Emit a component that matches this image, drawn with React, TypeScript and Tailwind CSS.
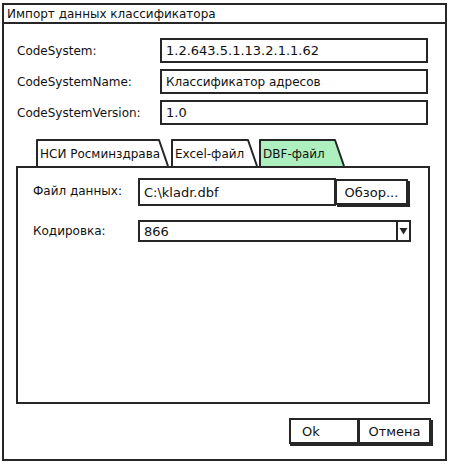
import React from "react";

const B = "border-[#262626]";

function Tab({ w, label, active }: { w: number; label: string; active?: boolean }) {
  return (
    <div className="relative h-[27px] flex items-center pl-[4px] pt-[3px]" style={{ width: w }}>
      <svg className="absolute inset-0" width={w} height={27} viewBox={`0 0 ${w} 27`}>
        <path
          d={`M1 27 L1 1 L${w - 10} 1 L${w - 1} 27`}
          fill={active ? "#aeefbf" : "#ffffff"}
          stroke="#262626"
          strokeWidth={2}
          strokeLinejoin="round"
        />
      </svg>
      <span className="relative leading-none whitespace-nowrap text-[12px]">{label}</span>
    </div>
  );
}

function Field({ value, w, small }: { value: string; w: number; small?: boolean }) {
  return (
    <div
      className={`h-[25px] border-2 ${B} flex items-center pl-[4px] leading-none ${small ? "text-[12px]" : "text-[13px]"}`}
      style={{ width: w }}
    >
      {value}
    </div>
  );
}

export default function App() {
  return (
    <div className="w-[450px] h-[464px] bg-white pt-[3px] pl-[2px] pr-[3px] pb-[3px] font-['DejaVu_Sans',sans-serif] text-[13px] text-[#111]">
      <div className={`h-full flex flex-col border-2 ${B}`}>
        <div className={`h-[19px] border-b-2 ${B} flex items-center pl-[3px] leading-none text-[12px]`}>
          Импорт данных классификатора
        </div>
        <div className="flex-1 flex flex-col pl-[12px] pt-[14px]">
          <div className="flex flex-col gap-[6px]">
            <div className="flex items-center">
              <div className="w-[144px] pl-[1px] text-[12px]">CodeSystem:</div>
              <Field value="1.2.643.5.1.13.2.1.1.62" w={268} />
            </div>
            <div className="flex items-center">
              <div className="w-[144px] pl-[1px] text-[12px]">CodeSystemName:</div>
              <Field value="Классификатор адресов" w={268} small />
            </div>
            <div className="flex items-center">
              <div className="w-[144px] pl-[1px] text-[12px]">CodeSystemVersion:</div>
              <Field value="1.0" w={268} />
            </div>
          </div>

          <div className="mt-[14px] flex items-end pl-[20px]">
            <Tab w={133} label="НСИ Росминздрава" />
            <div className="w-[2px]" />
            <Tab w={87} label="Excel-файл" />
            <div className="w-[1px]" />
            <Tab w={86} label="DBF-файл" active />
          </div>
          <div className={`w-[414px] h-[238px] border-2 ${B} pt-[10px] pl-[15px] flex flex-col`}>
            <div className="flex items-center">
              <div className="w-[105px] text-[12px] -mt-[2px]">Файл данных:</div>
              <div className={`w-[198px] h-[28px] border-2 ${B} flex items-center pl-[4px] leading-none`}>
                C:\kladr.dbf
              </div>
              <div
                className={`w-[73px] h-[26px] -ml-[1px] border-2 ${B} shadow-[2px_2px_0_#262626] flex items-center justify-center leading-none bg-white`}
              >
                Обзор...
              </div>
            </div>
            <div className="flex items-center mt-[14px]">
              <div className="w-[105px] text-[12px]">Кодировка:</div>
              <div className={`w-[273px] h-[22px] border-2 ${B} flex items-center`}>
                <div className="flex-1 pl-[4px] leading-none">866</div>
                <div className={`w-[13px] h-full border-l-2 ${B} flex items-center justify-center`}>
                  <svg width="9" height="8" viewBox="0 0 9 8">
                    <path d="M0.5 1 L8.5 1 L4.5 7.5 Z" fill="#262626" />
                  </svg>
                </div>
              </div>
            </div>
          </div>

          <div className="mt-[14px] flex pl-[273px]">
            <div
              className={`w-[70px] h-[26px] border-2 ${B} shadow-[1px_2px_0_#262626] flex items-center pl-[11px] leading-none`}
            >
              Ok
            </div>
            <div
              className={`w-[73px] h-[26px] -ml-[1px] border-2 ${B} shadow-[2px_2px_0_#262626] flex items-center justify-center leading-none`}
            >
              Отмена
            </div>
          </div>
        </div>
      </div>
    </div>
  );
}
